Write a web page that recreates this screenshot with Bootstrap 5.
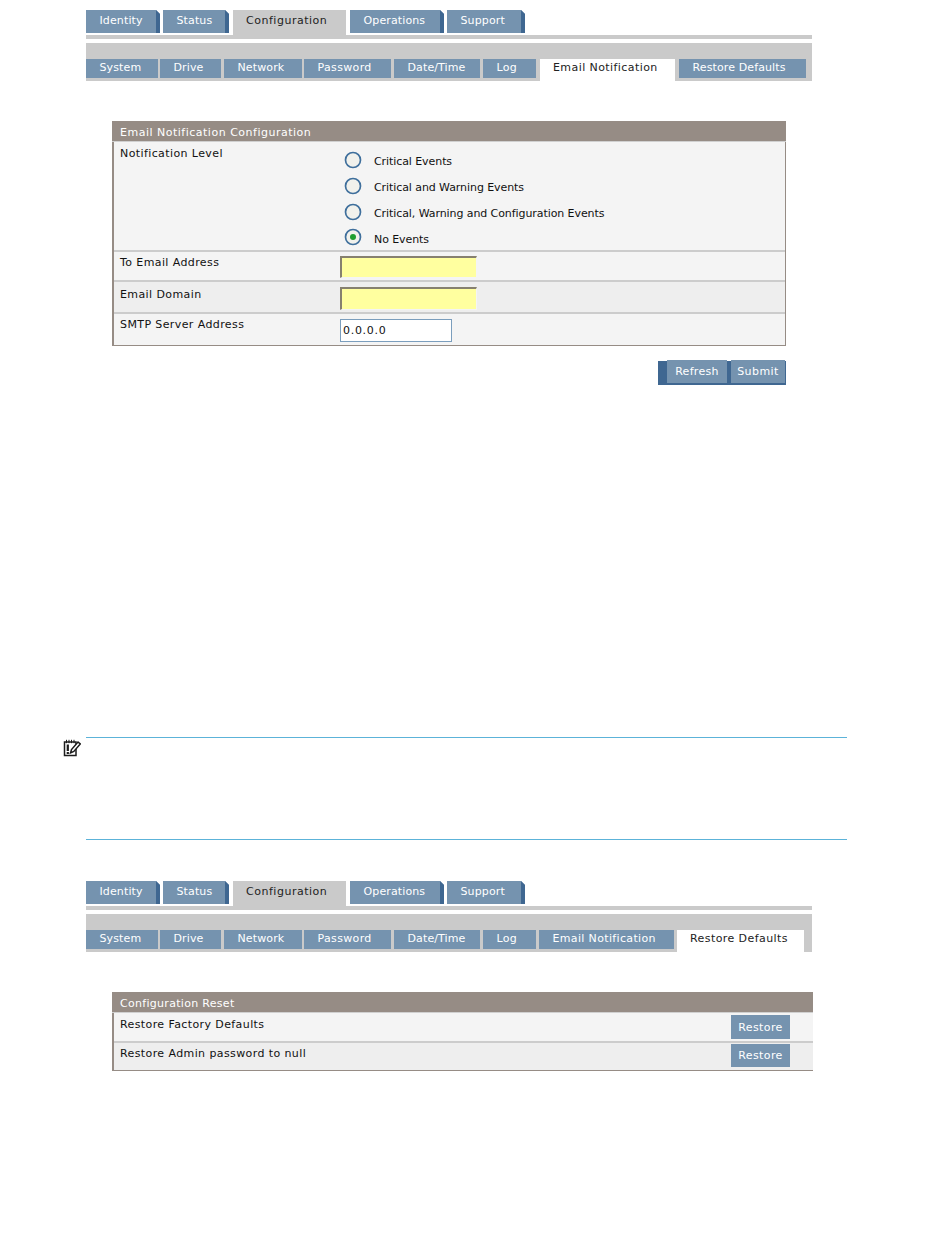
<!DOCTYPE html>
<html lang="en">
<head>
<meta charset="utf-8">
<title>Email Notification</title>
<link rel="stylesheet" href="https://cdn.jsdelivr.net/npm/bootstrap@5.3.0/dist/css/bootstrap.min.css">
<style>
body{margin:0;background:#fff;font-family:"DejaVu Sans","Liberation Sans",sans-serif;font-size:11px;line-height:13px;color:#111;}
.sheet{padding:10px 0 0 63px;}
.indent{margin-left:23px;width:726px;}
.main-tabs{gap:3px;height:25px;align-items:flex-start;}
.mtab{height:23px;background:#7593af;color:#fff;border-right:4px solid #3f6791;clip-path:polygon(0 0,calc(100% - 4px) 0,100% 4px,100% 100%,0 100%);display:block;text-decoration:none;padding:4px 0 0 13.5px;letter-spacing:.12px;}
.mtab-on{height:25px;background:#cacaca;color:#222;border-right:0;clip-path:none;margin:0 1px;padding-left:13px;letter-spacing:.52px;}
.w74{width:74px}.w66{width:66px}.w113{width:113px}.w94{width:94px}.w78{width:78px}
.main-rule{height:4px;background:#cacaca;margin-bottom:4px;}
.sub-band{background:#cacaca;height:38px;padding-top:16px;align-items:flex-start;}
.stab{display:block;height:19px;background:#7593af;color:#fff;text-decoration:none;padding:2px 0 0 13.5px;margin-right:3px;letter-spacing:.12px;white-space:nowrap;}
.stab-on{height:22px;background:#fff;color:#222;padding-left:13px;letter-spacing:.42px;}
.spread{letter-spacing:.35px;}
.s72{width:72px;margin-right:2px}.s61{width:61px}.s78{width:78px;margin-right:2px}.s87{width:87px}.s86{width:86px}.s53{width:53px}.s135{width:135px}.s127{width:127px}
.gap4{margin-right:4px}
.panel{margin:40px 0 0 26px;width:674px;border:solid #968c85;border-width:0 1px 1px 2px;}
.panel-open{width:701px;border-right:0;}
.panel-head{background:#968c85;color:#fff;height:21px;padding:5px 0 0 8px;margin-left:-2px;border-bottom:1px solid #d0d0d0;margin-right:-1px;letter-spacing:.5px;}
.panel-open .panel-head{margin-right:0;letter-spacing:.3px;}
.prow{background:#f4f4f4;border-bottom:2px solid #cccccc;}
.prow:last-child{border-bottom:0;}
.prow-alt{background:#eeeeee;}
.plabel{width:226px;padding:4px 0 0 6px;flex:none;letter-spacing:.4px;}
.pad5{padding-top:5px}.pad6{padding-top:6px}
.levels{padding-top:5px;}
.level{height:26px;gap:12px;align-items:center;letter-spacing:-.08px;}
.level:last-child{height:25px;}
.rdot{width:18px;height:18px;flex:none;display:block;margin:-1px 0 0 4px;}
.level span{padding-top:3px;}
.h30{height:30px}.h32{height:32px}.h31{height:31px}
.field{display:block;padding:0;font:inherit;color:#111;}
.field-req{width:137px;height:22px;margin-top:4px;background:#ffff9f;border:solid;border-width:2px 1px 1px 2px;border-color:#86806f #f4f4f4 #f4f4f4 #86806f;border-radius:0;}
.field-low{margin-top:5px;height:23px;}
.field-plain{width:112px;height:23px;margin-top:5px;background:#fff;border:1px solid #7b9ebd;border-radius:0;padding:0 2px;letter-spacing:.7px;}
.actions{margin:15px 0 0 572px;width:128px;height:24px;background:#3f6791;}
.actbtn{display:block;border:0;border-radius:0;padding:0;background:#7593af;color:#fff;font:inherit;height:23px;margin-top:-1px;}
.act1{width:60px;margin-left:9px;letter-spacing:.3px}.act2{width:54px;margin-left:4px;letter-spacing:.45px}
.note{margin-top:352px;}
.note-icon{width:23px;flex:none;padding-top:2px;}
.note-icon svg{display:block;width:18px;height:18px;}
.note-body{width:761px;height:103px;border-top:1px solid #5cb3d9;border-bottom:1px solid #5cb3d9;}
.second{margin-top:41px;}
.h27{height:27px}
.restore{display:block;width:59px;height:24px;border:0;border-radius:0;padding:0;background:#7593af;color:#fff;font:inherit;letter-spacing:.4px;margin:2px 23px 0 auto;}
.restore-b{height:23px;margin-top:1px;}
.grow{flex:1;}
</style>
</head>
<body>
<div class="sheet">
  <nav class="indent">
    <div class="d-flex main-tabs">
      <a class="mtab w74" href="#">Identity</a><a class="mtab w66" href="#">Status</a><a class="mtab mtab-on w113" href="#">Configuration</a><a class="mtab w94" href="#">Operations</a><a class="mtab w78" href="#">Support</a>
    </div>
    <div class="main-rule"></div>
    <div class="d-flex sub-band">
      <a class="stab s72" href="#">System</a><a class="stab s61" href="#">Drive</a><a class="stab s78" href="#">Network</a><a class="stab s87 spread" href="#">Password</a><a class="stab s86" href="#">Date/Time</a><a class="stab s53 gap4 spread" href="#">Log</a><a class="stab stab-on s135 gap4" href="#">Email Notification</a><a class="stab s127" href="#">Restore Defaults</a>
    </div>
  </nav>
  <div class="indent">
    <section class="panel">
      <div class="panel-head">Email Notification Configuration</div>
      <div class="prow d-flex">
        <div class="plabel pad5">Notification Level</div>
        <div class="levels">
          <div class="level d-flex"><svg class="rdot" viewBox="0 0 18 18"><circle cx="9" cy="9" r="7.5" fill="#f1f1ec" stroke="#3f6f9c" stroke-width="1.7"/></svg><span>Critical Events</span></div>
          <div class="level d-flex"><svg class="rdot" viewBox="0 0 18 18"><circle cx="9" cy="9" r="7.5" fill="#f1f1ec" stroke="#3f6f9c" stroke-width="1.7"/></svg><span>Critical and Warning Events</span></div>
          <div class="level d-flex"><svg class="rdot" viewBox="0 0 18 18"><circle cx="9" cy="9" r="7.5" fill="#f1f1ec" stroke="#3f6f9c" stroke-width="1.7"/></svg><span>Critical, Warning and Configuration Events</span></div>
          <div class="level d-flex"><svg class="rdot" viewBox="0 0 18 18"><circle cx="9" cy="9" r="7.5" fill="#f1f1ec" stroke="#3f6f9c" stroke-width="1.7"/><circle cx="9" cy="9" r="3" fill="#1f9e2f"/></svg><span>No Events</span></div>
        </div>
      </div>
      <div class="prow d-flex h30"><div class="plabel">To Email Address</div><input class="field field-req" type="text" aria-label="To Email Address"></div>
      <div class="prow prow-alt d-flex h32"><div class="plabel pad6">Email Domain</div><input class="field field-req field-low" type="text" aria-label="Email Domain"></div>
      <div class="prow d-flex h31"><div class="plabel">SMTP Server Address</div><input class="field field-plain" type="text" value="0.0.0.0" aria-label="SMTP Server Address"></div>
    </section>
    <div class="actions d-flex"><button class="actbtn act1" type="button">Refresh</button><button class="actbtn act2" type="button">Submit</button></div>
  </div>
  <div class="note d-flex">
    <div class="note-icon">
      <svg viewBox="0 0 18 18" fill="none" stroke="#1c1c1c">
        <path d="M1.500 3h11.500v13.500h-11.500z" stroke-width="1.500"/>
        <path d="M3.500 .8v3.400M6 .8v3.400M8.500 .8v3.400M11 .8v3.400" stroke-width="1"/>
        <path d="M4.800 5.500v6.500M4.800 13v2" stroke-width="2.200"/>
        <path d="M7.500 14l1-3.500 6.500-7.500 2.300 2-6.500 7.500z" fill="#fff" stroke-width="1.500"/>
      </svg>
    </div>
    <div class="note-body"></div>
  </div>
  <nav class="indent second">
    <div class="d-flex main-tabs">
      <a class="mtab w74" href="#">Identity</a><a class="mtab w66" href="#">Status</a><a class="mtab mtab-on w113" href="#">Configuration</a><a class="mtab w94" href="#">Operations</a><a class="mtab w78" href="#">Support</a>
    </div>
    <div class="main-rule"></div>
    <div class="d-flex sub-band">
      <a class="stab s72" href="#">System</a><a class="stab s61" href="#">Drive</a><a class="stab s78" href="#">Network</a><a class="stab s87 spread" href="#">Password</a><a class="stab s86" href="#">Date/Time</a><a class="stab s53 spread" href="#">Log</a><a class="stab s135 spread" href="#">Email Notification</a><a class="stab stab-on s127" href="#">Restore Defaults</a>
    </div>
  </nav>
  <div class="indent">
    <section class="panel panel-open">
      <div class="panel-head">Configuration Reset</div>
      <div class="prow d-flex h30"><div class="plabel grow pad5">Restore Factory Defaults</div><button class="restore" type="button">Restore</button></div>
      <div class="prow prow-alt d-flex h27"><div class="plabel grow">Restore Admin password to null</div><button class="restore restore-b" type="button">Restore</button></div>
    </section>
  </div>
</div>
<script src="https://cdn.jsdelivr.net/npm/bootstrap@5.3.0/dist/js/bootstrap.bundle.min.js"></script>
</body>
</html>
